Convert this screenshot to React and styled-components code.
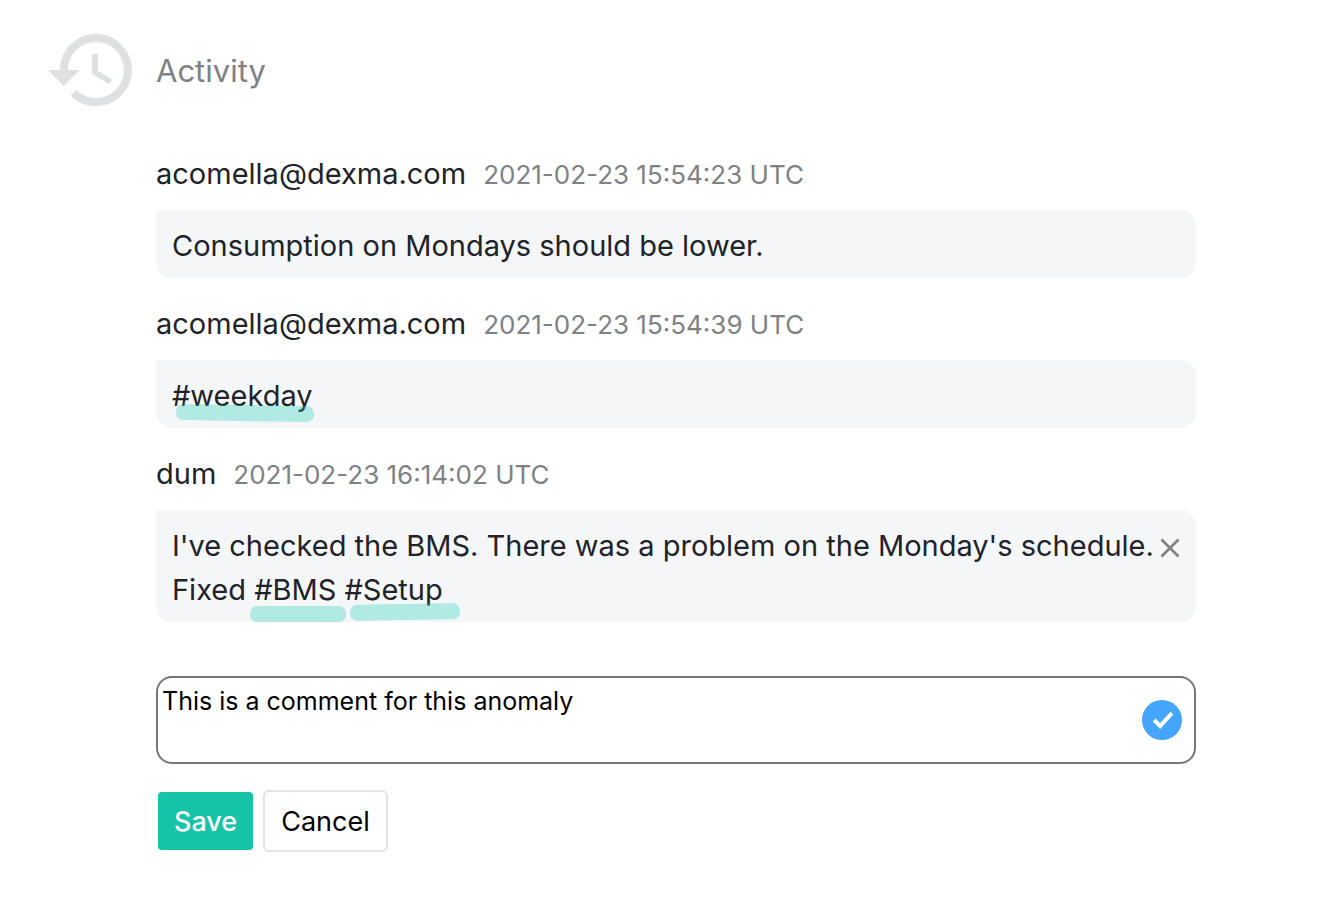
import { useState } from "react";
import styled, { createGlobalStyle } from "styled-components";

const GlobalStyle = createGlobalStyle`
  * {
    box-sizing: border-box;
  }

  body {
    margin: 0;
    background: #ffffff;
    color: #212329;
    font-family: Inter, "Liberation Sans", sans-serif;
  }
`;

const Panel = styled.section`
  display: grid;
  grid-template-columns: 96px minmax(0, 1fr);
  column-gap: 16px;
  padding: 22px 140px 44px 44px;
`;

const HistoryIcon = styled.svg`
  width: 96px;
  height: 96px;
  fill: #dfe0e2;
`;

const Title = styled.h2`
  align-self: center;
  margin: 0;
  padding-top: 2px;
  color: #808185;
  font-size: 31px;
  font-weight: 400;
  line-height: 44px;
`;

const Content = styled.div`
  grid-column: 2;
  padding-top: 34px;
`;

const Comments = styled.ul`
  display: flex;
  flex-direction: column;
  gap: 24px;
  margin: 0;
  padding: 0;
  list-style: none;
`;

const Meta = styled.div`
  display: flex;
  align-items: baseline;
  gap: 17px;
  height: 44px;
  margin-bottom: 14px;
  line-height: 44px;
`;

const Author = styled.span`
  font-size: 29px;
`;

const Time = styled.time`
  color: #808185;
  font-size: 26px;
`;

const Bubble = styled.div`
  display: flex;
  align-items: flex-start;
  padding: 14px 16px 10px;
  border-radius: 0 16px 16px 16px;
  background: #f4f6f8;
`;

const Message = styled.p`
  flex: 1;
  margin: 0;
  font-size: 29px;
  line-height: 44px;
`;

const Tag = styled.span`
  position: relative;

  /* marker stroke under the hashtag */
  &::after {
    content: "";
    position: absolute;
    top: ${({ $top }) => $top}px;
    left: ${({ $left }) => $left}px;
    width: ${({ $width }) => $width}px;
    height: 16px;
    border-radius: 7px;
    background: rgba(21, 205, 178, 0.3);
    transform: rotate(${({ $tilt }) => $tilt}deg);
    pointer-events: none;
  }
`;

const RemoveButton = styled.button`
  display: flex;
  align-items: center;
  height: 48px;
  padding: 0;
  border: none;
  background: none;
  color: #808080;
  cursor: pointer;

  svg {
    width: 20px;
    height: 20px;
  }
`;

const Form = styled.form`
  margin-top: 54px;
`;

const Field = styled.div`
  position: relative;
  display: flex;
`;

const TextArea = styled.textarea`
  width: 100%;
  height: 88px;
  padding: 6px 60px 6px 4px;
  border: 2px solid #767676;
  border-radius: 16px;
  outline: none;
  background: #ffffff;
  color: #000000;
  font-family: inherit;
  font-size: 25px;
  line-height: 34px;
  resize: none;
`;

const Badge = styled.svg`
  position: absolute;
  top: 24px;
  right: 14px;
  width: 40px;
  height: 40px;
`;

const Actions = styled.div`
  display: flex;
  align-items: center;
  gap: 10px;
  margin-top: 26px;
  padding-left: 2px;
`;

const Button = styled.button`
  padding: 13px 16px 11px;
  border: ${({ $primary }) => ($primary ? "none" : "2px solid #e3e3e4")};
  border-radius: ${({ $primary }) => ($primary ? "4px" : "6px")};
  background: ${({ $primary }) => ($primary ? "#15c3a6" : "#ffffff")};
  color: ${({ $primary }) => ($primary ? "#ffffff" : "#000000")};
  font-family: inherit;
  font-size: 27px;
  font-weight: ${({ $primary }) => ($primary ? 500 : 400)};
  line-height: 34px;
  cursor: pointer;
`;

const comments = [
  {
    id: 1,
    author: "acomella@dexma.com",
    time: "2021-02-23 15:54:23 UTC",
    message: "Consumption on Mondays should be lower.",
  },
  {
    id: 2,
    author: "acomella@dexma.com",
    time: "2021-02-23 15:54:39 UTC",
    message: (
      <Tag $top={27} $left={4} $width={138} $tilt={1}>
        #weekday
      </Tag>
    ),
  },
  {
    id: 3,
    author: "dum",
    time: "2021-02-23 16:14:02 UTC",
    removable: true,
    message: (
      <>
        I've checked the BMS. There was a problem on the Monday's schedule.
        Fixed{" "}
        <Tag $top={34} $left={-4} $width={96} $tilt={0}>
          #BMS
        </Tag>{" "}
        <Tag $top={32} $left={6} $width={110} $tilt={-1}>
          #Setup
        </Tag>
      </>
    ),
  },
];

export default function App() {
  const [text, setText] = useState("This is a comment for this anomaly");

  return (
    <>
      <GlobalStyle />
      <Panel>
        <HistoryIcon viewBox="0 0 24 24" aria-hidden="true">
          <path d="M13 3c-4.97 0-9 4.03-9 9H1l3.89 3.89.07.14L9 12H6c0-3.87 3.13-7 7-7s7 3.13 7 7-3.13 7-7 7c-1.93 0-3.68-.79-4.94-2.06l-1.42 1.42C8.27 19.99 10.51 21 13 21c4.97 0 9-4.03 9-9s-4.03-9-9-9zm-1 5v5l4.28 2.54.72-1.21-3.5-2.08V8H12z" />
        </HistoryIcon>
        <Title>Activity</Title>
        <Content>
          <Comments>
            {comments.map(({ id, author, time, message, removable }) => (
              <li key={id}>
                <Meta>
                  <Author>{author}</Author>
                  <Time>{time}</Time>
                </Meta>
                <Bubble>
                  <Message>{message}</Message>
                  {removable && (
                    <RemoveButton type="button" aria-label="Remove comment">
                      <svg viewBox="0 0 20 20" aria-hidden="true">
                        <path
                          d="M1.5 1.5l17 17M18.5 1.5l-17 17"
                          stroke="currentColor"
                          strokeWidth="2.6"
                        />
                      </svg>
                    </RemoveButton>
                  )}
                </Bubble>
              </li>
            ))}
          </Comments>
          <Form onSubmit={(e) => e.preventDefault()}>
            <Field>
              <TextArea
                aria-label="Comment"
                value={text}
                onChange={(e) => setText(e.target.value)}
              />
              <Badge viewBox="0 0 40 40" aria-hidden="true">
                <circle cx="20" cy="20" r="20" fill="#45a6ff" />
                <path
                  d="M10.7 21.4L18.2 29 31.4 14.4 28.4 11.7 18 23.2 13.7 18.6z"
                  fill="#ffffff"
                />
              </Badge>
            </Field>
            <Actions>
              <Button type="submit" $primary>
                Save
              </Button>
              <Button type="button">Cancel</Button>
            </Actions>
          </Form>
        </Content>
      </Panel>
    </>
  );
}
